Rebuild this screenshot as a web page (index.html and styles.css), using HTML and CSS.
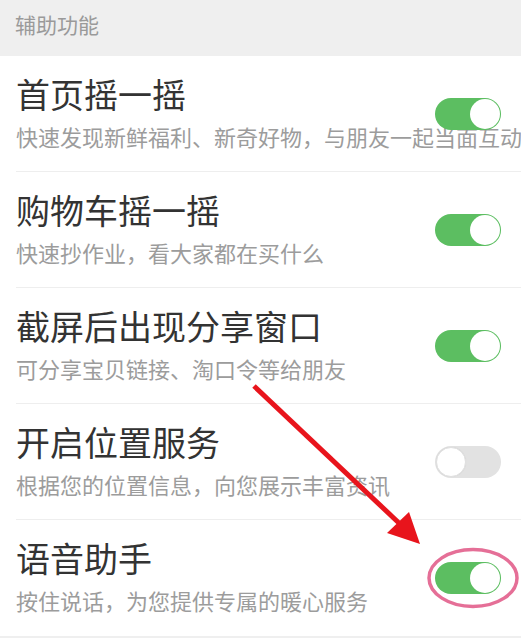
FILE: index.html
```html
<!DOCTYPE html>
<html lang="zh">
<head>
<meta charset="utf-8">
<link rel="stylesheet" href="styles.css">
</head>
<body>
<div class="page">
  <div class="section-head">辅助功能</div>
  <div class="list">
    <div class="row">
      <div class="text">
        <div class="title">首页摇一摇</div>
        <div class="desc">快速发现新鲜福利、新奇好物，与朋友一起当面互动</div>
      </div>
      <div class="switch on"><span class="knob"></span></div>
    </div>
    <div class="row">
      <div class="text">
        <div class="title">购物车摇一摇</div>
        <div class="desc">快速抄作业，看大家都在买什么</div>
      </div>
      <div class="switch on"><span class="knob"></span></div>
    </div>
    <div class="row">
      <div class="text">
        <div class="title">截屏后出现分享窗口</div>
        <div class="desc">可分享宝贝链接、淘口令等给朋友</div>
      </div>
      <div class="switch on"><span class="knob"></span></div>
    </div>
    <div class="row">
      <div class="text">
        <div class="title">开启位置服务</div>
        <div class="desc">根据您的位置信息，向您展示丰富资讯</div>
      </div>
      <div class="switch off"><span class="knob"></span></div>
    </div>
    <div class="row last">
      <div class="text">
        <div class="title">语音助手</div>
        <div class="desc">按住说话，为您提供专属的暖心服务</div>
      </div>
      <div class="switch on"><span class="knob"></span></div>
    </div>
  </div>
  <svg class="annot" width="521" height="638" viewBox="0 0 521 638">
    <ellipse cx="473" cy="578" rx="44" ry="28.5" fill="none" stroke="#e56f97" stroke-width="3.5"/>
    <line x1="254" y1="386" x2="400" y2="524" stroke="#e8141c" stroke-width="5"/>
    <polygon points="409,512 387,533 420,544" fill="#e8141c"/>
  </svg>
</div>
</body>
</html>
```
FILE: styles.css
```css
html, body {
  margin: 0;
  padding: 0;
  background: #efefef;
}
body {
  font-family: "Noto Sans CJK SC", "Noto Sans", sans-serif;
  width: 521px;
  height: 638px;
  overflow: hidden;
}
.page {
  position: relative;
  width: 521px;
  height: 638px;
}
.section-head {
  height: 56px;
  box-sizing: border-box;
  padding: 9px 0 0 15px;
  font-size: 21px;
  line-height: 30px;
  color: #9a9a9a;
  background: #efefef;
}
.list {
  background: #fff;
  padding-left: 16px;
}
.row {
  display: grid;
  grid-template-columns: minmax(0, 1fr);
  height: 116px;
  box-sizing: border-box;
  border-bottom: 1px solid #eeeeee;
  padding-right: 20px;
}
.row.last {
  border-bottom: none;
}
.text {
  grid-area: 1 / 1;
  padding-top: 18px;
  white-space: nowrap;
}
.title {
  font-size: 34px;
  line-height: 40px;
  color: #333;
}
.desc {
  margin-top: 7px;
  font-size: 22px;
  line-height: 30px;
  color: #9c9c9c;
}
.switch {
  grid-area: 1 / 1;
  justify-self: end;
  align-self: center;
  position: relative;
  z-index: 1;
  width: 66px;
  height: 32px;
  border-radius: 16px;
  box-sizing: border-box;
  display: flex;
  align-items: center;
}
.switch.on {
  background: #5cbe61;
  justify-content: flex-end;
}
.switch.off {
  background: #e2e2e2;
  justify-content: flex-start;
}
.knob {
  width: 30px;
  height: 30px;
  border-radius: 50%;
  background: #fff;
  box-sizing: border-box;
  margin: 0 1px;
}
.switch.off .knob {
  border: 1px solid #e0e0e0;
  box-shadow: 0 0 1px rgba(0,0,0,0.08);
}
.annot {
  position: absolute;
  left: 0;
  top: 0;
  pointer-events: none;
  z-index: 2;
}
```
